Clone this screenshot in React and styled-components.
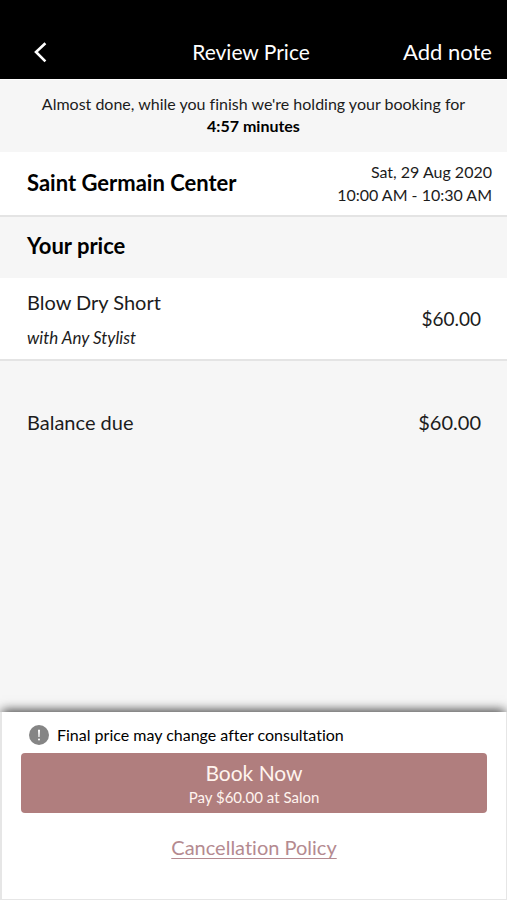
import React from "react";
import styled, { createGlobalStyle } from "styled-components";

const GlobalStyle = createGlobalStyle`
  *, *::before, *::after { box-sizing: border-box; }
  body {
    margin: 0;
    background: #f6f6f6;
    color: #1c1c1c;
    font-family: Lato, "Open Sans", sans-serif;
    font-variant-ligatures: none;
    -webkit-font-smoothing: antialiased;
  }
  h1, h2, p { margin: 0; }
  button { font-family: inherit; border: 0; padding: 0; cursor: pointer; }
`;

const Screen = styled.div`
  display: flex;
  flex-direction: column;
  min-height: 100vh;
`;

const NavBar = styled.header`
  display: grid;
  grid-template-columns: 1fr auto 1fr;
  align-items: center;
  padding: 24px 15px 0 32px;
  height: 79px;
  background: #000;
  color: #fff;
`;

const NavTitle = styled.h1`
  padding-right: 22px;
  font-size: 21px;
  line-height: 28px;
  font-weight: 400;
`;

const NavButton = styled.button`
  justify-self: ${({ $end }) => ($end ? "end" : "start")};
  display: flex;
  align-items: center;
  background: none;
  color: #fff;
  font-size: 22px;
  line-height: 28px;
`;

const HoldNotice = styled.p`
  padding: 13px 16px 15px;
  border-top: 1px solid #fff;
  font-size: 16px;
  line-height: 22px;
  text-align: center;

  strong { display: block; color: #000; }
`;

const Row = styled.section`
  display: flex;
  align-items: center;
  justify-content: space-between;
  padding: ${({ $pad }) => $pad};
  background: ${({ $plain }) => ($plain ? "transparent" : "#fff")};
  border-bottom: ${({ $plain }) => ($plain ? "0" : "2px solid #e4e4e4")};
`;

const Heading = styled.h2`
  color: #000;
  font-size: ${({ $large }) => ($large ? "22px" : "21px")};
  line-height: 28px;
  font-weight: 700;
`;

const SectionBar = styled.div`
  padding: 15px 27px 18px;
`;

const Appointment = styled.p`
  font-size: 16px;
  line-height: 23px;
  text-align: right;
`;

const ItemText = styled.p`
  font-size: 20px;
  line-height: 28px;
`;

const Stylist = styled.p`
  margin-top: 11px;
  font-size: 17px;
  line-height: 22px;
  font-style: italic;
`;

const Amount = styled.p`
  font-size: ${({ $large }) => ($large ? "20px" : "19px")};
  line-height: 28px;
`;

const Footer = styled.footer`
  display: flex;
  flex-direction: column;
  margin-top: auto;
  padding: 12px 19px 38px;
  min-height: 188px;
  border: solid #e6e6e6;
  border-width: 0 1px 1px 2px;
  background: #fff;
  box-shadow: 0 -4px 10px -2px #444;
  clip-path: inset(-24px 0 0 0);
`;

const Advisory = styled.p`
  display: flex;
  align-items: center;
  gap: 8px;
  padding-left: 8px;
  color: #000;
  font-size: 16px;
  line-height: 22px;
`;

const BookButton = styled.button`
  margin-top: 7px;
  padding: 6px 0;
  border-radius: 4px;
  background: #b07e7e;
  color: #fff4ee;
  font-size: 21px;
  line-height: 28px;
`;

const BookDetail = styled.span`
  display: block;
  font-size: 15px;
  line-height: 20px;
`;

const PolicyLink = styled.a`
  align-self: center;
  margin-top: 20px;
  color: #b48a90;
  font-size: 20px;
  line-height: 28px;
  text-decoration: underline;
  text-decoration-thickness: 1px;
  text-underline-offset: 3px;
  text-decoration-skip-ink: none;
`;

function BackIcon() {
  return (
    <svg width="18" height="22" viewBox="0 0 18 22" fill="none" aria-hidden="true">
      <path d="M13.4 2.2 L4 11 L13.4 20.4" stroke="#fff" strokeWidth="2.6" strokeLinecap="butt" strokeLinejoin="miter" />
    </svg>
  );
}

function AlertIcon() {
  return (
    <svg width="20" height="20" viewBox="0 0 20 20" aria-hidden="true">
      <circle cx="10" cy="10" r="10" fill="#858585" />
      <path d="M9 4.8 h2 l-.4 7.2 h-1.2z" fill="#fff" />
      <circle cx="10" cy="14.6" r="1" fill="#fff" />
    </svg>
  );
}

export default function App() {
  return (
    <Screen>
      <GlobalStyle />
      <NavBar>
        <NavButton type="button" aria-label="Back"><BackIcon /></NavButton>
        <NavTitle>Review Price</NavTitle>
        <NavButton type="button" $end>Add note</NavButton>
      </NavBar>
      <main>
        <HoldNotice>
          Almost done, while you finish we're holding your booking for
          <strong>4:57 minutes</strong>
        </HoldNotice>
        <Row $pad="8px 15px 9px 27px">
          <Heading $large>Saint Germain Center</Heading>
          <Appointment>
            Sat, 29 Aug 2020
            <br />
            10:00 AM - 10:30 AM
          </Appointment>
        </Row>
        <SectionBar>
          <Heading $large>Your price</Heading>
        </SectionBar>
        <Row $pad="10px 26px 10px 27px">
          <div>
            <ItemText>Blow Dry Short</ItemText>
            <Stylist>with Any Stylist</Stylist>
          </div>
          <Amount>$60.00</Amount>
        </Row>
        <Row $plain $pad="47px 26px 48px 27px">
          <ItemText>Balance due</ItemText>
          <Amount $large>$60.00</Amount>
        </Row>
      </main>
      <Footer>
        <Advisory>
          <AlertIcon />
          Final price may change after consultation
        </Advisory>
        <BookButton type="button">
          Book Now
          <BookDetail>Pay $60.00 at Salon</BookDetail>
        </BookButton>
        <PolicyLink href="#cancellation-policy">Cancellation Policy</PolicyLink>
      </Footer>
    </Screen>
  );
}
